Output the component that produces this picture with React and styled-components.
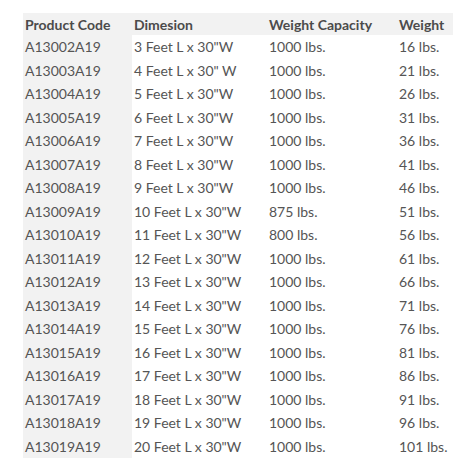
import React from 'react';
import styled, { createGlobalStyle } from 'styled-components';

const GlobalStyle = createGlobalStyle`
  html, body {
    margin: 0;
    padding: 0;
    background: #fff;
  }

  body {
    font-family: Lato, "Liberation Sans", sans-serif;
  }
`;

const Wrapper = styled.div`
  padding: 13px 0 0 23px;
`;

const Table = styled.table`
  border-collapse: collapse;
  table-layout: fixed;
  width: 430px;
  font-size: 14px;
  color: #555;

  th,
  td {
    box-sizing: border-box;
  }
`;

const HeadCell = styled.th`
  width: ${(props) => props.$width}px;
  height: 22px;
  padding: 1px 0 0 ${(props) => props.$pad}px;
  background: #f2f2f2;
  color: #4b4b4b;
  font-weight: 700;
  text-align: left;
  white-space: nowrap;
`;

const Row = styled.tr`
  height: 23.5px;
`;

const Cell = styled.td`
  padding: 0 0 0 ${(props) => props.$pad}px;
  background: ${(props) => (props.$shaded ? '#f2f2f2' : '#fff')};
  white-space: nowrap;
`;

const columns = [
  { title: 'Product Code', width: 109, pad: 2 },
  { title: 'Dimesion', width: 134, pad: 2 },
  { title: 'Weight Capacity', width: 130, pad: 3 },
  { title: 'Weight', width: 57, pad: 3 },
];

const products = [
  ['A13002A19', '3 Feet L x 30"W', '1000 lbs.', '16 lbs.'],
  ['A13003A19', '4 Feet L x 30" W', '1000 lbs.', '21 lbs.'],
  ['A13004A19', '5 Feet L x 30"W', '1000 lbs.', '26 lbs.'],
  ['A13005A19', '6 Feet L x 30"W', '1000 lbs.', '31 lbs.'],
  ['A13006A19', '7 Feet L x 30"W', '1000 lbs.', '36 lbs.'],
  ['A13007A19', '8 Feet L x 30"W', '1000 lbs.', '41 lbs.'],
  ['A13008A19', '9 Feet L x 30"W', '1000 lbs.', '46 lbs.'],
  ['A13009A19', '10 Feet L x 30"W', '875 lbs.', '51 lbs.'],
  ['A13010A19', '11 Feet L x 30"W', '800 lbs.', '56 lbs.'],
  ['A13011A19', '12 Feet L x 30"W', '1000 lbs.', '61 lbs.'],
  ['A13012A19', '13 Feet L x 30"W', '1000 lbs.', '66 lbs.'],
  ['A13013A19', '14 Feet L x 30"W', '1000 lbs.', '71 lbs.'],
  ['A13014A19', '15 Feet L x 30"W', '1000 lbs.', '76 lbs.'],
  ['A13015A19', '16 Feet L x 30"W', '1000 lbs.', '81 lbs.'],
  ['A13016A19', '17 Feet L x 30"W', '1000 lbs.', '86 lbs.'],
  ['A13017A19', '18 Feet L x 30"W', '1000 lbs.', '91 lbs.'],
  ['A13018A19', '19 Feet L x 30"W', '1000 lbs.', '96 lbs.'],
  ['A13019A19', '20 Feet L x 30"W', '1000 lbs.', '101 lbs.'],
];

function App() {
  return (
    <Wrapper>
      <GlobalStyle />
      <Table>
        <thead>
          <tr>
            {columns.map((col) => (
              <HeadCell key={col.title} $width={col.width} $pad={col.pad}>
                {col.title}
              </HeadCell>
            ))}
          </tr>
        </thead>
        <tbody>
          {products.map((row) => (
            <Row key={row[0]}>
              {row.map((value, i) => (
                <Cell key={columns[i].title} $pad={columns[i].pad} $shaded={i === 0}>
                  {value}
                </Cell>
              ))}
            </Row>
          ))}
        </tbody>
      </Table>
    </Wrapper>
  );
}

export default App;
